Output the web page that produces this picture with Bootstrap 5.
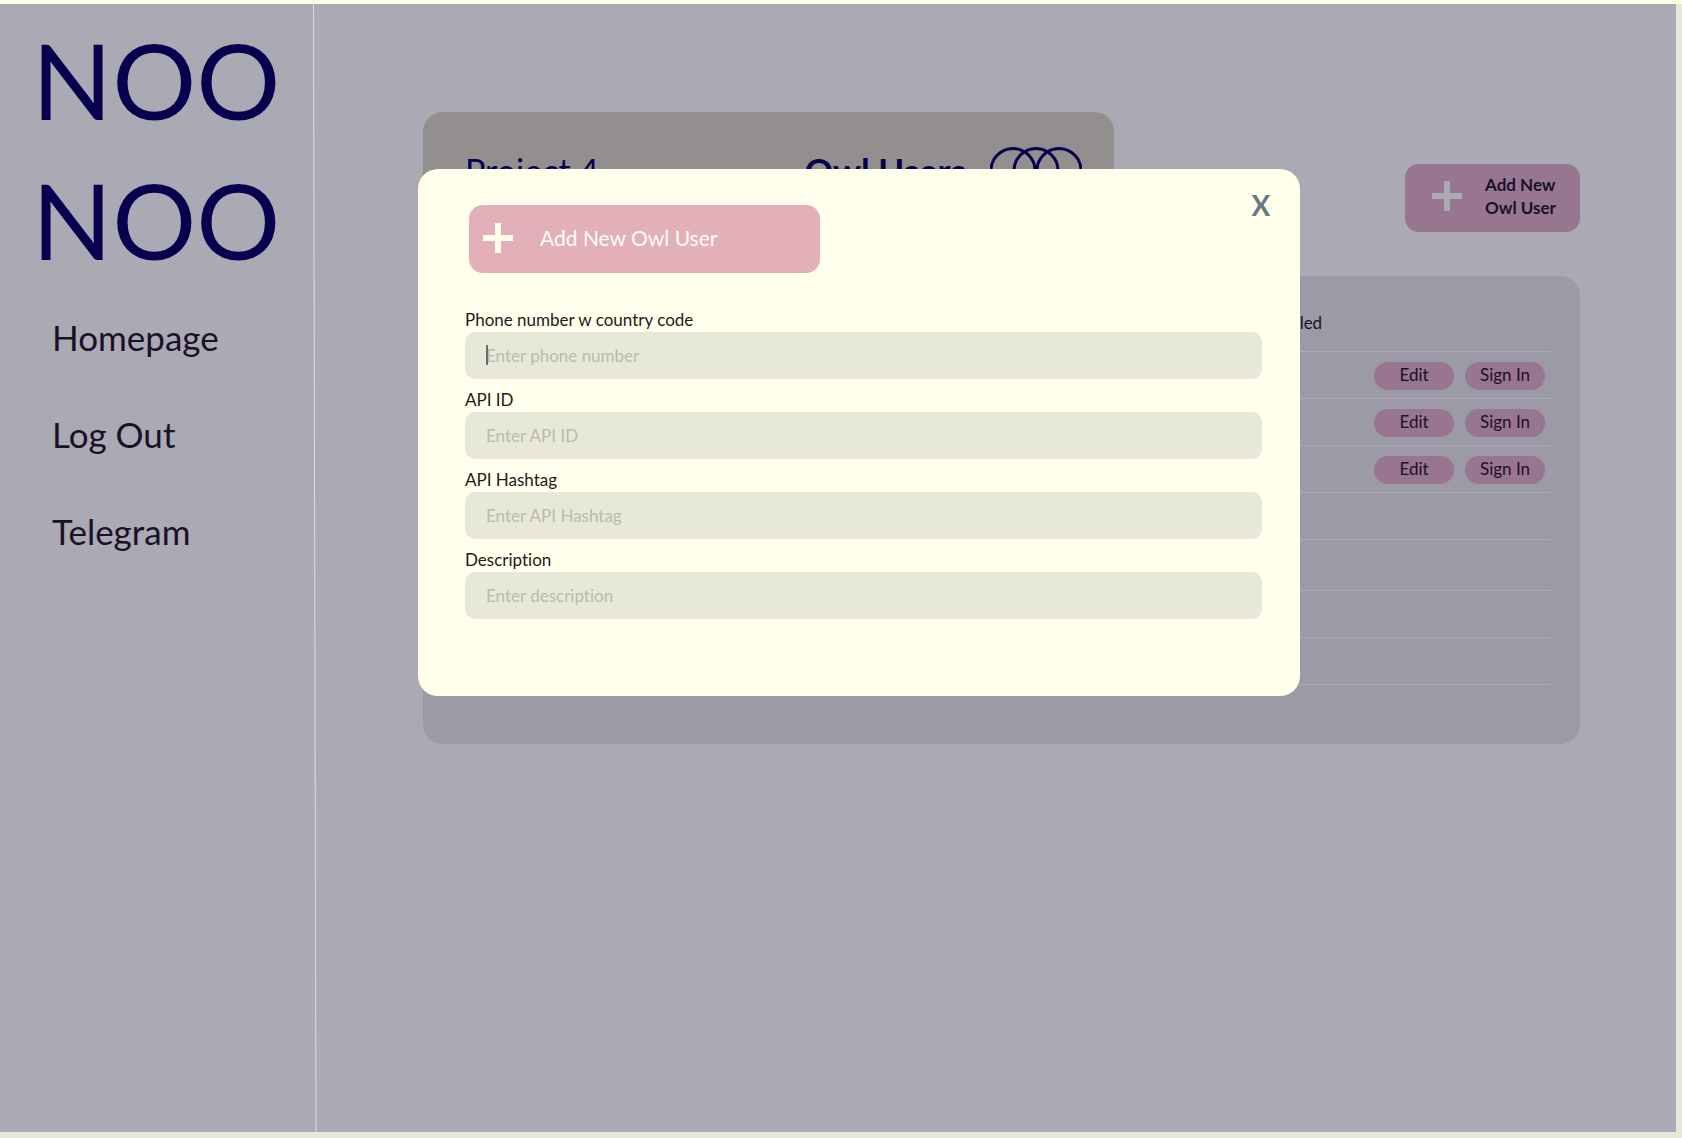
<!DOCTYPE html>
<html lang="en">
<head>
<meta charset="utf-8">
<meta name="viewport" content="width=device-width, initial-scale=1">
<title>Owl Users</title>
<link href="https://cdn.jsdelivr.net/npm/bootstrap@5.3.0/dist/css/bootstrap.min.css" rel="stylesheet">
<style>
  :root { --cream: #ffffec; --navy: #07004f; --ink: #1a1129; --shade: #aba9b3; --plum: #987590; }
  body { font-family: Lato, "Open Sans", sans-serif; font-variant-ligatures: none; color: var(--ink); background: #e7e8d9; border-top: 4px solid #ffffe6; }
  .app-shell { min-height: calc(100vh - 4px); padding: 0 6px 6px 0; }
  .app-shell > * { background: var(--shade); }
  .side-panel { flex: 0 0 314px; padding: 5px 16px 0 32px; }
  .brand-line { font-size: 105px; line-height: 140px; color: var(--navy); white-space: nowrap; }
  .side-links { margin-top: 24px; padding-left: 20px; }
  .side-links a { font-size: 35px; line-height: 49px; margin-bottom: 48px; color: var(--ink); text-decoration: none; padding: 0; }
  .divider-line { flex: 0 0 4px; width: 4px; margin-right: -4px; z-index: 1; background: none; overflow: visible; }
  .main-area { padding: 108px 96px 0 109px; }
  .project-card { flex: 0 1 691px; height: 124px; border-radius: 20px; background: #938f8f; color: var(--navy); padding: 0 32px 8px 42px; font-size: 34px; }
  .project-card strong { margin-right: 24px; font-size: 35px; }
  .add-btn { width: 175px; height: 68px; margin-top: 52px; border-radius: 14px; background: var(--plum); color: var(--ink); font-size: 17px; line-height: 23px; font-weight: 700; padding: 0 0 4px 27px; gap: 23px; border: 0; }
  .users-panel { margin-top: 40px; height: 468px; border-radius: 20px; background: #9c9aa6; padding: 0 30px 0 42px; }
  .users-table { font-size: 17px; table-layout: fixed; }
  .name-col { width: 79%; }
  .users-table th { height: 75px; padding: 18px 0 0; font-weight: 400; }
  .users-table td { height: 47px; padding: 2px 5px 0 0; }
  .users-table tr { border-bottom: 1px solid #aba9b5; }
  .users-table .tall-row td { height: 51px; }
  .pill-row { gap: 11px; }
  .pill-btn { width: 80px; height: 28px; border: 0; border-radius: 14px; background: var(--plum); color: var(--ink); font-size: 17px; line-height: 24px; padding: 0 0 1px; }
  .dialog-layer { position: absolute; top: 169px; left: 418px; right: 382px; z-index: 5; }
  .dialog-card { border-radius: 20px; background: var(--cream); padding: 36px 38px 77px 47px; }
  .dialog-title { width: 351px; height: 68px; margin-left: 4px; padding: 0 0 2px 14px; gap: 27px; border: 0; border-radius: 14px; background: #e3b0b9; color: var(--cream); font-size: 21px; }
  .close-x { border: 0; background: none; padding: 0; margin: -17px -18px 0 0; width: 38px; height: 34px; font-size: 28px; line-height: 34px; font-weight: 700; color: #687786; }
  .field-label { display: block; font-size: 17px; line-height: 24px; color: #1d1a1c; }
  .field-box, .field-box:focus { height: 47px; border: 0; border-radius: 10px; background: #e7e8d9; padding: 0 21px; font-size: 17px; font-variant-ligatures: none; box-shadow: none; }
  .field-box::placeholder { color: #bbbbac; opacity: 1; }
  .fields { margin-top: 35px; gap: 9px; }
  .caret-bar { position: absolute; left: 21px; bottom: 14px; width: 2px; height: 20px; background: #6c6b63; }
</style>
</head>
<body>
<div class="app-shell d-flex">
  <aside class="side-panel">
    <div class="brand-line">NOO</div>
    <div class="brand-line">NOO</div>
    <nav class="side-links nav flex-column">
      <a class="nav-link" href="#">Homepage</a>
      <a class="nav-link" href="#">Log Out</a>
      <a class="nav-link" href="#">Telegram</a>
    </nav>
  </aside>
  <svg class="divider-line" viewBox="0 0 4 100" preserveAspectRatio="none" aria-hidden="true"><line x1="-0.5" y1="0" x2="2" y2="100" stroke="#dedddd" vector-effect="non-scaling-stroke"/></svg>
  <main class="main-area flex-grow-1">
    <div class="d-flex justify-content-between align-items-start">
      <section class="project-card d-flex align-items-center">
        <span>Project 4</span>
        <strong class="ms-auto">Owl Users</strong>
        <svg width="92" height="47" viewBox="0 0 92 47" fill="none" stroke="#07004f" stroke-width="3" aria-hidden="true"><circle cx="23" cy="23.500" r="22"/><circle cx="46" cy="23.500" r="22"/><circle cx="69" cy="23.500" r="22"/></svg>
      </section>
      <button type="button" class="add-btn d-flex align-items-center text-start">
        <svg width="30" height="30" viewBox="0 0 30 30" fill="#aba9b3" aria-hidden="true"><path d="M12 0h6v12h12v6H18v12h-6V18H0v-6h12z"/></svg>
        <span>Add New<br>Owl User</span>
      </button>
    </div>
    <section class="users-panel">
      <table class="users-table w-100">
        <thead><tr><th class="name-col text-end">Enabled</th><th></th></tr></thead>
        <tbody>
          <tr><td></td><td><div class="pill-row d-flex justify-content-end"><button type="button" class="pill-btn">Edit</button><button type="button" class="pill-btn">Sign In</button></div></td></tr>
          <tr><td></td><td><div class="pill-row d-flex justify-content-end"><button type="button" class="pill-btn">Edit</button><button type="button" class="pill-btn">Sign In</button></div></td></tr>
          <tr><td></td><td><div class="pill-row d-flex justify-content-end"><button type="button" class="pill-btn">Edit</button><button type="button" class="pill-btn">Sign In</button></div></td></tr>
          <tr><td></td><td></td></tr>
          <tr class="tall-row"><td></td><td></td></tr>
          <tr><td></td><td></td></tr>
          <tr><td></td><td></td></tr>
        </tbody>
      </table>
    </section>
  </main>
</div>

<div class="dialog-layer" role="dialog" aria-label="Add New Owl User">
  <form class="dialog-card">
    <div class="d-flex justify-content-between align-items-start">
      <button type="submit" class="dialog-title d-flex align-items-center">
        <svg width="30" height="30" viewBox="0 0 30 30" fill="#ffffec" aria-hidden="true"><path d="M12 0h6v12h12v6H18v12h-6V18H0v-6h12z"/></svg>
        <span>Add New Owl User</span>
      </button>
      <button type="button" class="close-x" aria-label="Close">X</button>
    </div>
    <div class="fields d-flex flex-column">
      <div class="position-relative">
        <label class="field-label" for="phone">Phone number w country code</label>
        <input class="form-control field-box" id="phone" type="tel" placeholder="Enter phone number">
        <span class="caret-bar"></span>
      </div>
      <div>
        <label class="field-label" for="apiId">API ID</label>
        <input class="form-control field-box" id="apiId" type="text" placeholder="Enter API ID">
      </div>
      <div>
        <label class="field-label" for="apiHash">API Hashtag</label>
        <input class="form-control field-box" id="apiHash" type="text" placeholder="Enter API Hashtag">
      </div>
      <div>
        <label class="field-label" for="desc">Description</label>
        <input class="form-control field-box" id="desc" type="text" placeholder="Enter description">
      </div>
    </div>
  </form>
</div>
<script src="https://cdn.jsdelivr.net/npm/bootstrap@5.3.0/dist/js/bootstrap.bundle.min.js"></script>
</body>
</html>
